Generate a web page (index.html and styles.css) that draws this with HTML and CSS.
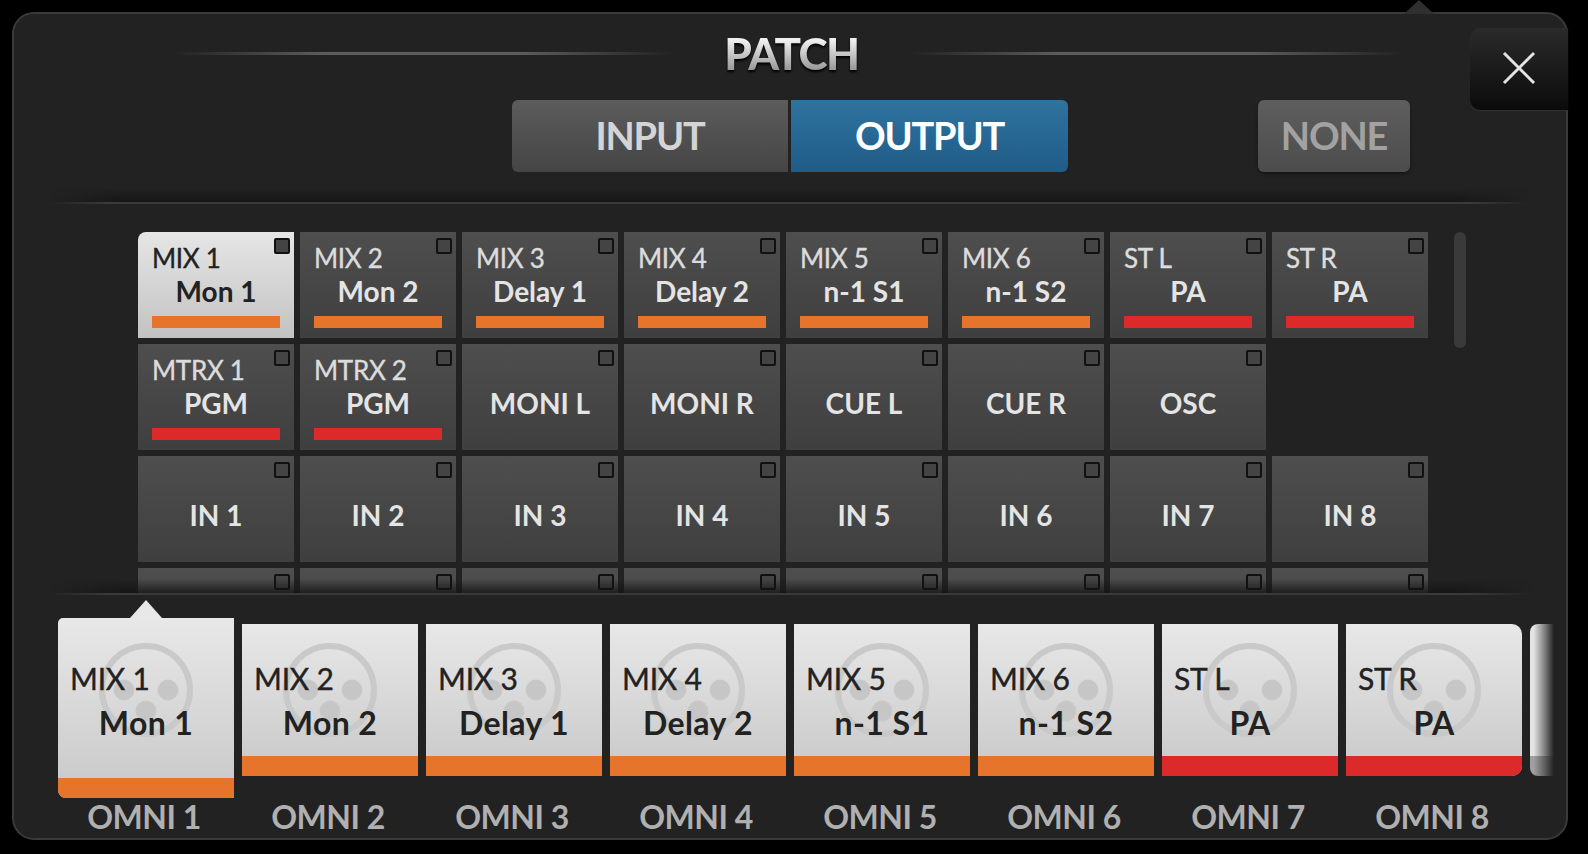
FILE: index.html
```html
<!DOCTYPE html>
<html lang="en">
<head>
    <meta charset="UTF-8">
    <title>Patch</title>
    <link rel="stylesheet" href="styles.css">
</head>
<body>
    <svg class="defs" width="0" height="0">
        <symbol id="xlr" viewBox="0 0 96 96">
            <circle cx="48" cy="48" r="44" fill="none" stroke-width="6"></circle>
            <circle cx="26" cy="48" r="10"></circle>
            <circle cx="70" cy="48" r="10"></circle>
            <circle cx="48" cy="69" r="10"></circle>
        </symbol>
    </svg>
    <div class="panel">
        <div class="notch"></div>
        <button class="close">
            <svg width="34" height="34" viewBox="0 0 34 34"><path d="M2 2 L32 32 M32 2 L2 32"></path></svg>
        </button>

        <div class="header">
            <div class="hairline"></div>
            <h1 class="title">PATCH</h1>
            <div class="hairline hairline-right"></div>
        </div>

        <div class="tabs">
            <div class="tab">INPUT</div>
            <div class="tab tab-on">OUTPUT</div>
            <div class="tab tab-none">NONE</div>
        </div>

        <div class="sep"></div>

        <div class="list">
            <div class="grid">
                <div class="cell cell-on"><span class="box"></span><div class="top">MIX 1</div><div class="name">Mon 1</div><div class="bar orange"></div></div>
                <div class="cell"><span class="box"></span><div class="top">MIX 2</div><div class="name">Mon 2</div><div class="bar orange"></div></div>
                <div class="cell"><span class="box"></span><div class="top">MIX 3</div><div class="name">Delay 1</div><div class="bar orange"></div></div>
                <div class="cell"><span class="box"></span><div class="top">MIX 4</div><div class="name">Delay 2</div><div class="bar orange"></div></div>
                <div class="cell"><span class="box"></span><div class="top">MIX 5</div><div class="name">n-1 S1</div><div class="bar orange"></div></div>
                <div class="cell"><span class="box"></span><div class="top">MIX 6</div><div class="name">n-1 S2</div><div class="bar orange"></div></div>
                <div class="cell"><span class="box"></span><div class="top">ST L</div><div class="name">PA</div><div class="bar red"></div></div>
                <div class="cell"><span class="box"></span><div class="top">ST R</div><div class="name">PA</div><div class="bar red"></div></div>

                <div class="cell"><span class="box"></span><div class="top">MTRX 1</div><div class="name">PGM</div><div class="bar red"></div></div>
                <div class="cell"><span class="box"></span><div class="top">MTRX 2</div><div class="name">PGM</div><div class="bar red"></div></div>
                <div class="cell"><span class="box"></span><div class="top"></div><div class="name">MONI L</div></div>
                <div class="cell"><span class="box"></span><div class="top"></div><div class="name">MONI R</div></div>
                <div class="cell"><span class="box"></span><div class="top"></div><div class="name">CUE L</div></div>
                <div class="cell"><span class="box"></span><div class="top"></div><div class="name">CUE R</div></div>
                <div class="cell"><span class="box"></span><div class="top"></div><div class="name">OSC</div></div>
                <div class="cell-empty"></div>

                <div class="cell"><span class="box"></span><div class="top"></div><div class="name">IN 1</div></div>
                <div class="cell"><span class="box"></span><div class="top"></div><div class="name">IN 2</div></div>
                <div class="cell"><span class="box"></span><div class="top"></div><div class="name">IN 3</div></div>
                <div class="cell"><span class="box"></span><div class="top"></div><div class="name">IN 4</div></div>
                <div class="cell"><span class="box"></span><div class="top"></div><div class="name">IN 5</div></div>
                <div class="cell"><span class="box"></span><div class="top"></div><div class="name">IN 6</div></div>
                <div class="cell"><span class="box"></span><div class="top"></div><div class="name">IN 7</div></div>
                <div class="cell"><span class="box"></span><div class="top"></div><div class="name">IN 8</div></div>

                <div class="cell"><span class="box"></span></div>
                <div class="cell"><span class="box"></span></div>
                <div class="cell"><span class="box"></span></div>
                <div class="cell"><span class="box"></span></div>
                <div class="cell"><span class="box"></span></div>
                <div class="cell"><span class="box"></span></div>
                <div class="cell"><span class="box"></span></div>
                <div class="cell"><span class="box"></span></div>
            </div>
            <div class="scrollbar"></div>
        </div>

        <div class="sep sep-low"></div>

        <div class="strip">
            <div class="tile tile-on">
                <svg class="xlr"><use href="#xlr"></use></svg>
                <div class="tile-top">MIX 1</div>
                <div class="tile-name">Mon 1</div>
                <div class="tile-bar orange"></div>
            </div>
            <div class="tile">
                <svg class="xlr"><use href="#xlr"></use></svg>
                <div class="tile-top">MIX 2</div>
                <div class="tile-name">Mon 2</div>
                <div class="tile-bar orange"></div>
            </div>
            <div class="tile">
                <svg class="xlr"><use href="#xlr"></use></svg>
                <div class="tile-top">MIX 3</div>
                <div class="tile-name">Delay 1</div>
                <div class="tile-bar orange"></div>
            </div>
            <div class="tile">
                <svg class="xlr"><use href="#xlr"></use></svg>
                <div class="tile-top">MIX 4</div>
                <div class="tile-name">Delay 2</div>
                <div class="tile-bar orange"></div>
            </div>
            <div class="tile">
                <svg class="xlr"><use href="#xlr"></use></svg>
                <div class="tile-top">MIX 5</div>
                <div class="tile-name">n-1 S1</div>
                <div class="tile-bar orange"></div>
            </div>
            <div class="tile">
                <svg class="xlr"><use href="#xlr"></use></svg>
                <div class="tile-top">MIX 6</div>
                <div class="tile-name">n-1 S2</div>
                <div class="tile-bar orange"></div>
            </div>
            <div class="tile">
                <svg class="xlr"><use href="#xlr"></use></svg>
                <div class="tile-top">ST L</div>
                <div class="tile-name">PA</div>
                <div class="tile-bar red"></div>
            </div>
            <div class="tile tile-last">
                <svg class="xlr"><use href="#xlr"></use></svg>
                <div class="tile-top">ST R</div>
                <div class="tile-name">PA</div>
                <div class="tile-bar red"></div>
            </div>
            <div class="tile-peek"></div>
        </div>

        <div class="labels">
            <div>OMNI 1</div>
            <div>OMNI 2</div>
            <div>OMNI 3</div>
            <div>OMNI 4</div>
            <div>OMNI 5</div>
            <div>OMNI 6</div>
            <div>OMNI 7</div>
            <div>OMNI 8</div>
        </div>
    </div>
</body>
</html>
```

FILE: styles.css
```css
* { box-sizing: border-box; }
html, body { margin: 0; height: 100%; }
body { background: #000; font-family: 'Lato', 'Noto Sans', sans-serif; overflow: hidden; }
.defs { position: absolute; }

.panel {
    position: relative;
    width: 1556px;
    height: 828px;
    margin: 12px 0 0 12px;
    background: #222;
    border: 2px solid #3a3a3a;
    border-radius: 22px;
}
.notch {
    position: absolute;
    top: -14px;
    left: 1390px;
    width: 30px;
    height: 14px;
    background: #2f2f2f;
    clip-path: polygon(50% 0, 100% 100%, 0 100%);
}
.close {
    position: absolute;
    z-index: 3;
    top: 14px;
    right: -2px;
    width: 98px;
    height: 82px;
    padding: 0;
    background: linear-gradient(#2b2b2b, #0b0b0b);
    border: 0;
    border-radius: 10px 0 0 10px;
    box-shadow: 0 1px 1px #333;
    display: flex;
    align-items: center;
    justify-content: center;
}
.close svg { fill: none; stroke: #e4e4e4; stroke-width: 3; margin-bottom: 2px; }

.header { display: flex; align-items: center; height: 78px; padding-left: 159px; }
.hairline {
    width: 500px;
    height: 3px;
    background: linear-gradient(90deg, transparent, #5c5c5c 30%, #5c5c5c 70%, transparent);
}
.hairline-right { width: 493px; }
.title {
    width: 237px;
    margin: 0;
    font-size: 44px;
    font-weight: 900;
    text-align: center;
    letter-spacing: -1.5px;
    background: linear-gradient(#f0f0f0 25%, #9c9c9c 80%);
    -webkit-background-clip: text;
    background-clip: text;
    color: transparent;
    filter: drop-shadow(0 2px 1px #000);
}

.tabs { display: flex; gap: 3px; height: 72px; margin-top: 8px; padding-left: 498px; }
.tab {
    width: 276px;
    display: flex;
    align-items: center;
    justify-content: center;
    padding-bottom: 2px;
    color: #d4d4d4;
    font-size: 38px;
    font-weight: 700;
    letter-spacing: -1.2px;
    background: linear-gradient(#5c5c5c, #454545);
    border-radius: 6px 0 0 6px;
}
.tab-on {
    width: 277px;
    color: #fff;
    background: linear-gradient(#2f739f, #205c88);
    border-radius: 0 6px 6px 0;
}
.tab-none {
    width: 152px;
    margin-left: 187px;
    color: #a2a2a2;
    background: linear-gradient(#5e5e5e, #4c4c4c);
    border-radius: 6px;
    box-shadow: 0 2px 3px #151515;
}

.sep {
    position: relative;
    z-index: 2;
    height: 2px;
    margin: 30px 36px 0 36px;
    background: linear-gradient(90deg, transparent, #3a3a3a 4%, #3a3a3a 96%, transparent);
}
.sep::before {
    content: "";
    position: absolute;
    left: 0;
    right: 0;
    bottom: 2px;
    height: 14px;
    background: linear-gradient(90deg, transparent, rgba(20,20,20,.8) 5%, rgba(20,20,20,.8) 95%, transparent);
    -webkit-mask-image: linear-gradient(transparent, #000);
    mask-image: linear-gradient(transparent, #000);
}
.sep-low { margin-top: 0; }

.list {
    display: flex;
    align-items: flex-start;
    height: 361px;
    margin-top: 28px;
    padding-left: 124px;
    overflow: hidden;
}
.grid {
    display: grid;
    grid-template-columns: repeat(8, 156px);
    grid-auto-rows: 106px;
    gap: 6px;
    flex: none;
}
.cell {
    position: relative;
    padding: 8px 14px 0;
    color: #dcdcdc;
    background: linear-gradient(#4e4e4e, #3f3f3f);
}
.cell-on {
    color: #222;
    background: linear-gradient(#e6e6e6, #c2c2c2);
    border-top-left-radius: 8px;
}
.box {
    position: absolute;
    top: 6px;
    right: 4px;
    width: 16px;
    height: 16px;
    background: #444;
    border: 2px solid #111;
    border-radius: 2px;
}
.top { height: 36px; font-size: 26px; line-height: 36px; letter-spacing: -0.3px; -webkit-text-stroke: 0.4px currentColor; }
.name { height: 36px; margin-top: -3px; font-size: 28px; font-weight: 700; line-height: 36px; text-align: center; color: #e4e4e4; }
.cell-on .name { color: #222; }
.bar { height: 12px; margin-top: 7px; }
.orange { background: #e6752b; }
.red { background: #dc2a2a; }
.scrollbar {
    flex: none;
    width: 12px;
    height: 116px;
    margin-left: 26px;
    background: #3a3a3a;
    border-radius: 6px;
}

.strip {
    display: flex;
    gap: 8px;
    height: 198px;
    margin-top: 5px;
    padding: 24px 0 0 44px;
    overflow: hidden;
}
.tile {
    position: relative;
    display: flex;
    flex-direction: column;
    flex: none;
    width: 176px;
    height: 152px;
    padding-top: 36px;
    color: #222;
    background: linear-gradient(#e8e8e8, #c8c8c8);
}
.tile-last { border-radius: 0 10px 10px 0; }
.tile-on {
    height: 180px;
    margin-top: -6px;
    padding-top: 42px;
    border-radius: 5px 0 0 8px;
}
.tile-on::before {
    content: "";
    position: absolute;
    top: -18px;
    left: 72px;
    width: 32px;
    height: 18px;
    background: #e8e8e8;
    clip-path: polygon(50% 0, 100% 100%, 0 100%);
}
.tile-peek {
    flex: none;
    width: 24px;
    height: 152px;
    background: linear-gradient(90deg, transparent 15%, rgba(34,34,34,.5) 60%, #222),
                linear-gradient(#e4e4e4 132px, #a0a0a0 132px);
    border-radius: 8px 0 0 8px;
}
.xlr {
    position: absolute;
    top: 18px;
    left: 40px;
    width: 96px;
    height: 96px;
    fill: #c6c6c6;
    stroke: #c9c9c9;
}
.tile-on .xlr { top: 24px; }
.tile-top, .tile-name { position: relative; height: 36px; line-height: 36px; }
.tile-top { padding-left: 12px; font-size: 30px; letter-spacing: -0.2px; -webkit-text-stroke: 0.4px currentColor; }
.tile-name { margin-top: 9px; font-size: 32px; font-weight: 700; letter-spacing: 0.4px; text-align: center; }
.tile-bar { margin-top: auto; height: 20px; }
.tile-on .tile-bar { border-bottom-left-radius: 8px; }
.tile-last .tile-bar { border-bottom-right-radius: 10px; }

.labels {
    position: absolute;
    left: 42px;
    bottom: 1px;
    display: grid;
    grid-template-columns: repeat(8, 176px);
    gap: 8px;
    color: #b0b0b0;
    font-size: 32px;
    font-weight: 700;
    letter-spacing: -0.5px;
    line-height: 40px;
    text-align: center;
}
```
